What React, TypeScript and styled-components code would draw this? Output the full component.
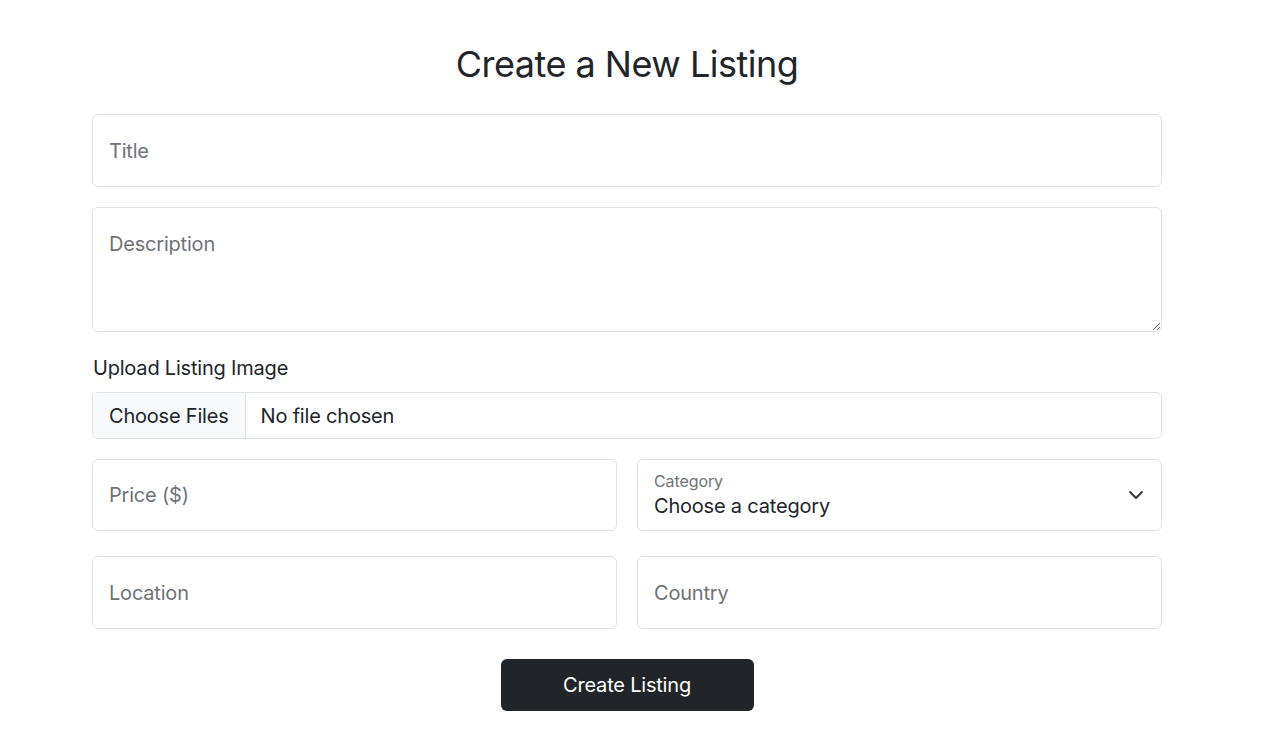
import React from 'react';
import styled, { createGlobalStyle } from 'styled-components';

const GlobalStyle = createGlobalStyle`
  * {
    box-sizing: border-box;
  }

  body {
    margin: 0;
    background: #fff;
    color: #212529;
    font-family: Inter, 'Noto Sans', sans-serif;
  }
`;

const fieldFont = `
  font-family: Inter, 'Noto Sans', sans-serif;
  font-size: 20px;
  letter-spacing: -0.2px;
  line-height: 30px;
  color: #212529;
`;

export default function App() {
  return (
    <>
      <GlobalStyle />
      <Page>
        <Heading>Create a New Listing</Heading>
        <Form onSubmit={(e) => e.preventDefault()}>
          <TextField $tall placeholder="Title" />
          <TextArea placeholder="Description" />

          <UploadGroup>
            <FieldLabel htmlFor="listing-image">Upload Listing Image</FieldLabel>
            <FileField id="listing-image" type="file" multiple />
          </UploadGroup>

          <Row>
            <TextField placeholder="Price ($)" />
            <SelectBox>
              <SelectLabel>Category</SelectLabel>
              <Select defaultValue="">
                <option value="">Choose a category</option>
                <option value="rooms">Rooms</option>
                <option value="mountains">Mountains</option>
                <option value="castles">Castles</option>
              </Select>
              <Chevron viewBox="0 0 16 16" aria-hidden="true">
                <path d="m2 5 6 6 6-6" />
              </Chevron>
            </SelectBox>
          </Row>

          <Row $spaced>
            <TextField $tall placeholder="Location" />
            <TextField $tall placeholder="Country" />
          </Row>

          <Actions>
            <SubmitButton type="submit">Create Listing</SubmitButton>
          </Actions>
        </Form>
      </Page>
    </>
  );
}

const Page = styled.main`
  width: 1070px;
  margin-left: 92px;
  padding-top: 42px;
`;

const Heading = styled.h1`
  margin: 0 0 28px;
  text-align: center;
  font-size: 36px;
  font-weight: 400;
  letter-spacing: -0.5px;
  line-height: 44px;
  color: #212529;
`;

const Form = styled.form`
  display: flex;
  flex-flow: column nowrap;
`;

const TextField = styled.input<{ $tall?: boolean }>`
  ${fieldFont}
  width: 100%;
  height: ${({ $tall }) => ($tall ? '73px' : '72px')};
  padding: 20px 16px;
  border: 1px solid #dee2e6;
  border-radius: 6px;
  background: #fff;
  outline: none;

  &::placeholder {
    color: #6f7276;
  }
`;

const TextArea = styled.textarea`
  ${fieldFont}
  width: 100%;
  height: 125px;
  margin-top: 20px;
  padding: 21px 16px;
  border: 1px solid #dee2e6;
  border-radius: 6px;
  resize: vertical;
  outline: none;

  &::placeholder {
    color: #6f7276;
  }
`;

const UploadGroup = styled.div`
  display: flex;
  flex-flow: column nowrap;
  margin-top: 21px;
`;

const FieldLabel = styled.label`
  ${fieldFont}
  margin-bottom: 9px;
  padding-left: 1px;
`;

const FileField = styled.input`
  ${fieldFont}
  width: 100%;
  height: 47px;
  padding: 0 16px 0 0;
  border: 1px solid #dee2e6;
  border-radius: 6px;
  overflow: hidden;

  &::file-selector-button {
    ${fieldFont}
    height: 45px;
    margin: 0 15px 0 0;
    padding: 0 16px;
    border: 0;
    border-right: 1px solid #dee2e6;
    border-radius: 0;
    background: #f8f9fa;
    cursor: pointer;
  }
`;

const Row = styled.div<{ $spaced?: boolean }>`
  display: grid;
  grid-template-columns: 1fr 1fr;
  gap: 20px;
  margin-top: ${({ $spaced }) => ($spaced ? '25px' : '20px')};
`;

const SelectBox = styled.div`
  position: relative;
`;

const SelectLabel = styled.span`
  position: absolute;
  top: 12px;
  left: 17px;
  font-size: 16px;
  line-height: 20px;
  letter-spacing: -0.1px;
  color: #6f7276;
  pointer-events: none;
`;

const Select = styled.select`
  ${fieldFont}
  width: 100%;
  height: 72px;
  padding: 31px 48px 9px 16px;
  border: 1px solid #dee2e6;
  border-radius: 6px;
  background: #fff;
  appearance: none;
  outline: none;
`;

const Chevron = styled.svg`
  position: absolute;
  top: 28px;
  right: 18px;
  width: 16px;
  height: 16px;
  fill: none;
  stroke: #343a40;
  stroke-width: 2;
  stroke-linecap: round;
  stroke-linejoin: round;
  pointer-events: none;
`;

const Actions = styled.div`
  display: flex;
  justify-content: center;
  margin-top: 30px;
`;

const SubmitButton = styled.button`
  ${fieldFont}
  width: 253px;
  height: 52px;
  border: 0;
  border-radius: 6px;
  background: #212529;
  color: #fff;
  cursor: pointer;
`;
